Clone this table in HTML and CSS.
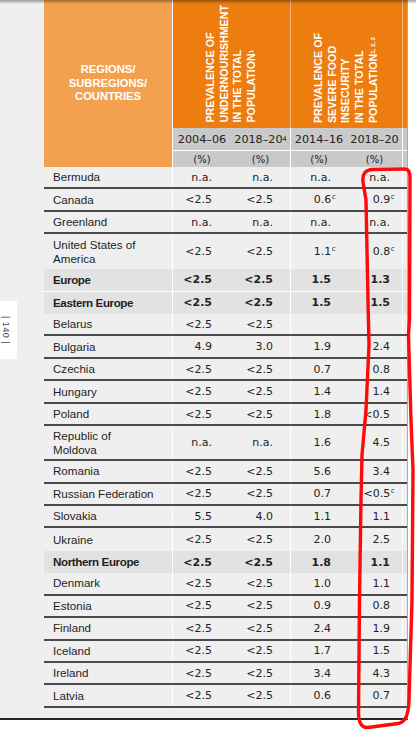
FILE: index.html
```html
<!DOCTYPE html>
<html lang="en">
<head>
<meta charset="utf-8">
<title>Food security table</title>
<link rel="stylesheet" href="styles.css">
</head>
<body>
<div class="page">
  <div class="gutter">
    <div class="pagenum"><span>| 140 |</span></div>
  </div>
  <div class="table">
    <div class="head">
      <div class="h-region">REGIONS/<br>SUBREGIONS/<br>COUNTRIES</div>
      <div class="h-group g1"><div class="vt">PREVALENCE OF<br>UNDERNOURISHMENT<br>IN THE TOTAL<br>POPULATION<span class="vsup">1</span></div></div>
      <div class="h-group g2"><div class="vt">PREVALENCE OF<br>SEVERE FOOD<br>INSECURITY<br>IN THE TOTAL<br>POPULATION<span class="vsup">1, 2, 3</span></div></div>
      <div class="h-tail"></div>
      <div class="yr">2004–06</div>
      <div class="yr sep">2018–20<sup>4</sup></div>
      <div class="yr">2014–16</div>
      <div class="yr sep">2018–20</div>
      <div class="yr"></div>
      <div class="pc">(%)</div>
      <div class="pc sep">(%)</div>
      <div class="pc">(%)</div>
      <div class="pc sep">(%)</div>
      <div class="pc"></div>
    </div>

    <div class="row"><div class="nm">Bermuda</div><div class="v v1">n.a.</div><div class="v v2">n.a.</div><div class="v v3">n.a.</div><div class="v v4">n.a.</div><div></div></div>
    <div class="row"><div class="nm">Canada</div><div class="v v1">&lt;2.5</div><div class="v v2">&lt;2.5</div><div class="v v3"><span>0.6<i class="s">c</i></span></div><div class="v v4"><span>0.9<i class="s">c</i></span></div><div></div></div>
    <div class="row"><div class="nm">Greenland</div><div class="v v1">n.a.</div><div class="v v2">n.a.</div><div class="v v3">n.a.</div><div class="v v4">n.a.</div><div></div></div>
    <div class="row tall nl"><div class="nm">United States of<br>America</div><div class="v v1">&lt;2.5</div><div class="v v2">&lt;2.5</div><div class="v v3"><span>1.1<i class="s">c</i></span></div><div class="v v4"><span>0.8<i class="s">c</i></span></div><div></div></div>
    <div class="row agg wl"><div class="nm">Europe</div><div class="v v1">&lt;2.5</div><div class="v v2">&lt;2.5</div><div class="v v3">1.5</div><div class="v v4">1.3</div><div></div></div>
    <div class="row agg"><div class="nm">Eastern Europe</div><div class="v v1">&lt;2.5</div><div class="v v2">&lt;2.5</div><div class="v v3">1.5</div><div class="v v4">1.5</div><div></div></div>
    <div class="row"><div class="nm">Belarus</div><div class="v v1">&lt;2.5</div><div class="v v2">&lt;2.5</div><div class="v v3"></div><div class="v v4"></div><div></div></div>
    <div class="row"><div class="nm">Bulgaria</div><div class="v v1">4.9</div><div class="v v2">3.0</div><div class="v v3">1.9</div><div class="v v4">2.4</div><div></div></div>
    <div class="row"><div class="nm">Czechia</div><div class="v v1">&lt;2.5</div><div class="v v2">&lt;2.5</div><div class="v v3">0.7</div><div class="v v4">0.8</div><div></div></div>
    <div class="row"><div class="nm">Hungary</div><div class="v v1">&lt;2.5</div><div class="v v2">&lt;2.5</div><div class="v v3">1.4</div><div class="v v4">1.4</div><div></div></div>
    <div class="row"><div class="nm">Poland</div><div class="v v1">&lt;2.5</div><div class="v v2">&lt;2.5</div><div class="v v3">1.8</div><div class="v v4">&lt;0.5</div><div></div></div>
    <div class="row tall"><div class="nm">Republic of<br>Moldova</div><div class="v v1">n.a.</div><div class="v v2">n.a.</div><div class="v v3">1.6</div><div class="v v4">4.5</div><div></div></div>
    <div class="row"><div class="nm">Romania</div><div class="v v1">&lt;2.5</div><div class="v v2">&lt;2.5</div><div class="v v3">5.6</div><div class="v v4">3.4</div><div></div></div>
    <div class="row"><div class="nm">Russian Federation</div><div class="v v1">&lt;2.5</div><div class="v v2">&lt;2.5</div><div class="v v3">0.7</div><div class="v v4"><span>&lt;0.5<i class="s">c</i></span></div><div></div></div>
    <div class="row"><div class="nm">Slovakia</div><div class="v v1">5.5</div><div class="v v2">4.0</div><div class="v v3">1.1</div><div class="v v4">1.1</div><div></div></div>
    <div class="row nl"><div class="nm">Ukraine</div><div class="v v1">&lt;2.5</div><div class="v v2">&lt;2.5</div><div class="v v3">2.0</div><div class="v v4">2.5</div><div></div></div>
    <div class="row agg"><div class="nm">Northern Europe</div><div class="v v1">&lt;2.5</div><div class="v v2">&lt;2.5</div><div class="v v3">1.8</div><div class="v v4">1.1</div><div></div></div>
    <div class="row"><div class="nm">Denmark</div><div class="v v1">&lt;2.5</div><div class="v v2">&lt;2.5</div><div class="v v3">1.0</div><div class="v v4">1.1</div><div></div></div>
    <div class="row"><div class="nm">Estonia</div><div class="v v1">&lt;2.5</div><div class="v v2">&lt;2.5</div><div class="v v3">0.9</div><div class="v v4">0.8</div><div></div></div>
    <div class="row"><div class="nm">Finland</div><div class="v v1">&lt;2.5</div><div class="v v2">&lt;2.5</div><div class="v v3">2.4</div><div class="v v4">1.9</div><div></div></div>
    <div class="row"><div class="nm">Iceland</div><div class="v v1">&lt;2.5</div><div class="v v2">&lt;2.5</div><div class="v v3">1.7</div><div class="v v4">1.5</div><div></div></div>
    <div class="row"><div class="nm">Ireland</div><div class="v v1">&lt;2.5</div><div class="v v2">&lt;2.5</div><div class="v v3">3.4</div><div class="v v4">4.3</div><div></div></div>
    <div class="row"><div class="nm">Latvia</div><div class="v v1">&lt;2.5</div><div class="v v2">&lt;2.5</div><div class="v v3">0.6</div><div class="v v4">0.7</div><div></div></div>
  </div>
</div>
<svg class="ink" width="416" height="731" viewBox="0 0 416 731" aria-hidden="true">
  <defs>
    <linearGradient id="sh" x1="0" y1="0" x2="0" y2="1">
      <stop offset="0" stop-color="#000" stop-opacity="0.35"/>
      <stop offset="1" stop-color="#000" stop-opacity="0"/>
    </linearGradient>
  </defs>
  <rect x="0" y="0" width="416" height="4" fill="url(#sh)"/>
  <path d="M363 182 C362 173 366 170 372 169.5 L404 169 C409 169 410 172 410 178 L409.5 320 L408.5 335 L411 420 L413 470 L412 600 L409 700 C408.5 716 405 722 398 723.5 L368 727.5 C361 728 358.5 722 358.5 712 L359.5 600 L361 500 L362 455 L366 410 L369 345 L368 300 L366 200 Z" fill="none" stroke="#ff0a0a" stroke-width="3.4" stroke-linejoin="round" stroke-linecap="round"/>
</svg>
</body>
</html>
```
FILE: styles.css
```css
* { box-sizing: border-box; }
html, body { margin: 0; padding: 0; }
body {
  width: 416px;
  height: 731px;
  background: #fff;
  position: relative;
  overflow: hidden;
  font-family: "Liberation Sans", Arial, sans-serif;
  color: #1e1e1e;
}
.page {
  display: flex;
  width: 408px;
  height: 720px;
  background: #efefef;
  border-right: 1px solid #ababab;
  border-bottom: 2px solid #262626;
}
.gutter { flex: 0 0 44px; }
.pagenum {
  margin-top: 301px;
  width: 17px;
  height: 58px;
  background: #fff;
  display: flex;
  align-items: center;
  justify-content: flex-start;
  padding-left: 1px;
}
.pagenum span {
  writing-mode: vertical-rl;
  font-size: 9px;
  line-height: 10px;
  color: #444;
  white-space: nowrap;
  letter-spacing: 0.5px;
}
.table { flex: 0 0 363px; }
.head, .row {
  display: grid;
  grid-template-columns: 129px 58px 60px 56px 56px 4px;
}
.head { grid-template-rows: 128px 22px 17px; }
.h-region {
  grid-row: 1 / 4;
  grid-column: 1;
  background: #f4a14f;
  border-right: 1px solid #fff;
  display: flex;
  align-items: center;
  justify-content: center;
  text-align: center;
  color: #fff;
  font-weight: 700;
  font-size: 11.2px;
  line-height: 13.6px;
}
.h-group {
  grid-row: 1;
  background: #ed7d0e;
  display: flex;
  justify-content: center;
  align-items: flex-end;
  padding-bottom: 5px;
  border-right: 1px solid rgba(255, 255, 255, 0.45);
}
.g1 { grid-column: 2 / 4; }
.g2 { grid-column: 4 / 6; }
.h-tail { grid-row: 1; grid-column: 6; background: #ed7d0e; }
.vt {
  writing-mode: vertical-rl;
  transform: rotate(180deg);
  color: #fff;
  font-weight: 700;
  font-size: 10.7px;
  line-height: 13.7px;
  white-space: nowrap;
}
.vsup { font-size: 6px; }
.yr, .pc {
  background: #c9c9c9;
  display: flex;
  align-items: center;
  justify-content: center;
  font-family: "DejaVu Sans", sans-serif;
  color: #222;
}
.yr { font-size: 11.2px; }
.yr sup { font-size: 6.5px; line-height: 0; vertical-align: 5px; }
.pc { font-size: 10px; border-top: 1px solid #fff; }
.sep { border-right: 1px solid #fff; }

.row {
  height: 22.45px;
  border-bottom: 2px solid #4b4b4b;
}
.row.tall { height: 34.85px; }
.row.nl { border-bottom: 0; }
.row.agg { background: #e2e2e2; border-bottom: 0; font-weight: 700; }
.row.agg.wl { border-bottom: 1px solid #fff; }
.nm {
  border-right: 1px solid #fff;
  padding-left: 9px;
  display: flex;
  align-items: center;
  font-size: 11.6px;
  line-height: 14px;
}
.agg .nm { letter-spacing: -0.4px; }
.v {
  display: flex;
  align-items: center;
  justify-content: flex-end;
  font-family: "DejaVu Sans", sans-serif;
  font-size: 11px;
  color: #222;
}
.v1 { padding-right: 19px; }
.v2 { padding-right: 17px; border-right: 1px solid #fff; }
.v3 { padding-right: 16px; }
.v4 { padding-right: 12px; border-right: 1px solid #fff; }
.s {
  font-style: normal;
  font-size: 7px;
  line-height: 0;
  vertical-align: 4px;
  margin-left: 0.5px;
  margin-right: -4.5px;
}
.ink {
  position: absolute;
  left: 0;
  top: 0;
  pointer-events: none;
}
```
